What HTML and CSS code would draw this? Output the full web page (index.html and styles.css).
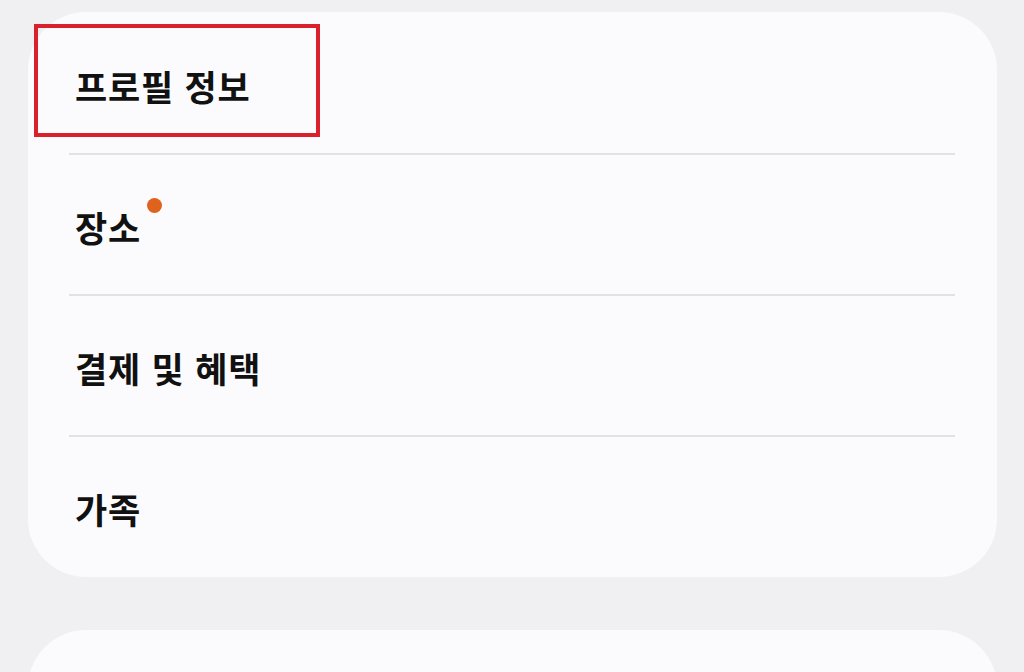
FILE: index.html
```html
<!DOCTYPE html>
<html lang="ko">
<head>
<meta charset="utf-8">
<link rel="stylesheet" href="styles.css">
</head>
<body>
<div class="page">
  <div class="card">
    <div class="row"><span class="label">프로필 정보</span></div>
    <div class="divider"></div>
    <div class="row"><span class="label">장소<span class="dot"></span></span></div>
    <div class="divider"></div>
    <div class="row"><span class="label">결제 및 혜택</span></div>
    <div class="divider"></div>
    <div class="row"><span class="label">가족</span></div>
    <div class="highlight"></div>
  </div>
  <div class="card card-next"></div>
</div>
</body>
</html>
```

FILE: styles.css
```css
html, body {
  margin: 0;
  padding: 0;
  background: #f0f0f2;
  width: 1024px;
  height: 672px;
  overflow: hidden;
}
.page {
  height: 672px;
  box-sizing: border-box;
  overflow: hidden;
  padding: 12px 27px 0 28px;
  display: flex;
  flex-direction: column;
  gap: 53px;
}
.card {
  position: relative;
  background: #fbfbfd;
  border-radius: 58px;
  padding: 2px 0 0;
  height: 563px;
  flex-shrink: 0;
  display: flex;
  flex-direction: column;
}
.row {
  height: 139px;
  display: flex;
  align-items: center;
  padding-left: 47px;
  padding-top: 3px;
  box-sizing: border-box;
}
.label {
  position: relative;
  font-family: "Noto Sans CJK KR", "Noto Sans", sans-serif;
  font-weight: 700;
  font-size: 35px;
  color: #111111;
  line-height: 1;
  letter-spacing: 0.8px;
}
.dot {
  position: absolute;
  right: -21px;
  top: -11px;
  width: 15px;
  height: 15px;
  border-radius: 50%;
  background: #e0621f;
}
.divider {
  height: 2px;
  background: #e2e2e4;
  margin: 0 42px 0 41px;
}
.highlight {
  position: absolute;
  left: 6px;
  top: 12px;
  width: 278px;
  height: 105px;
  border: 4px solid #d9202c;
}
.card-next {
  height: 200px;
}
```
